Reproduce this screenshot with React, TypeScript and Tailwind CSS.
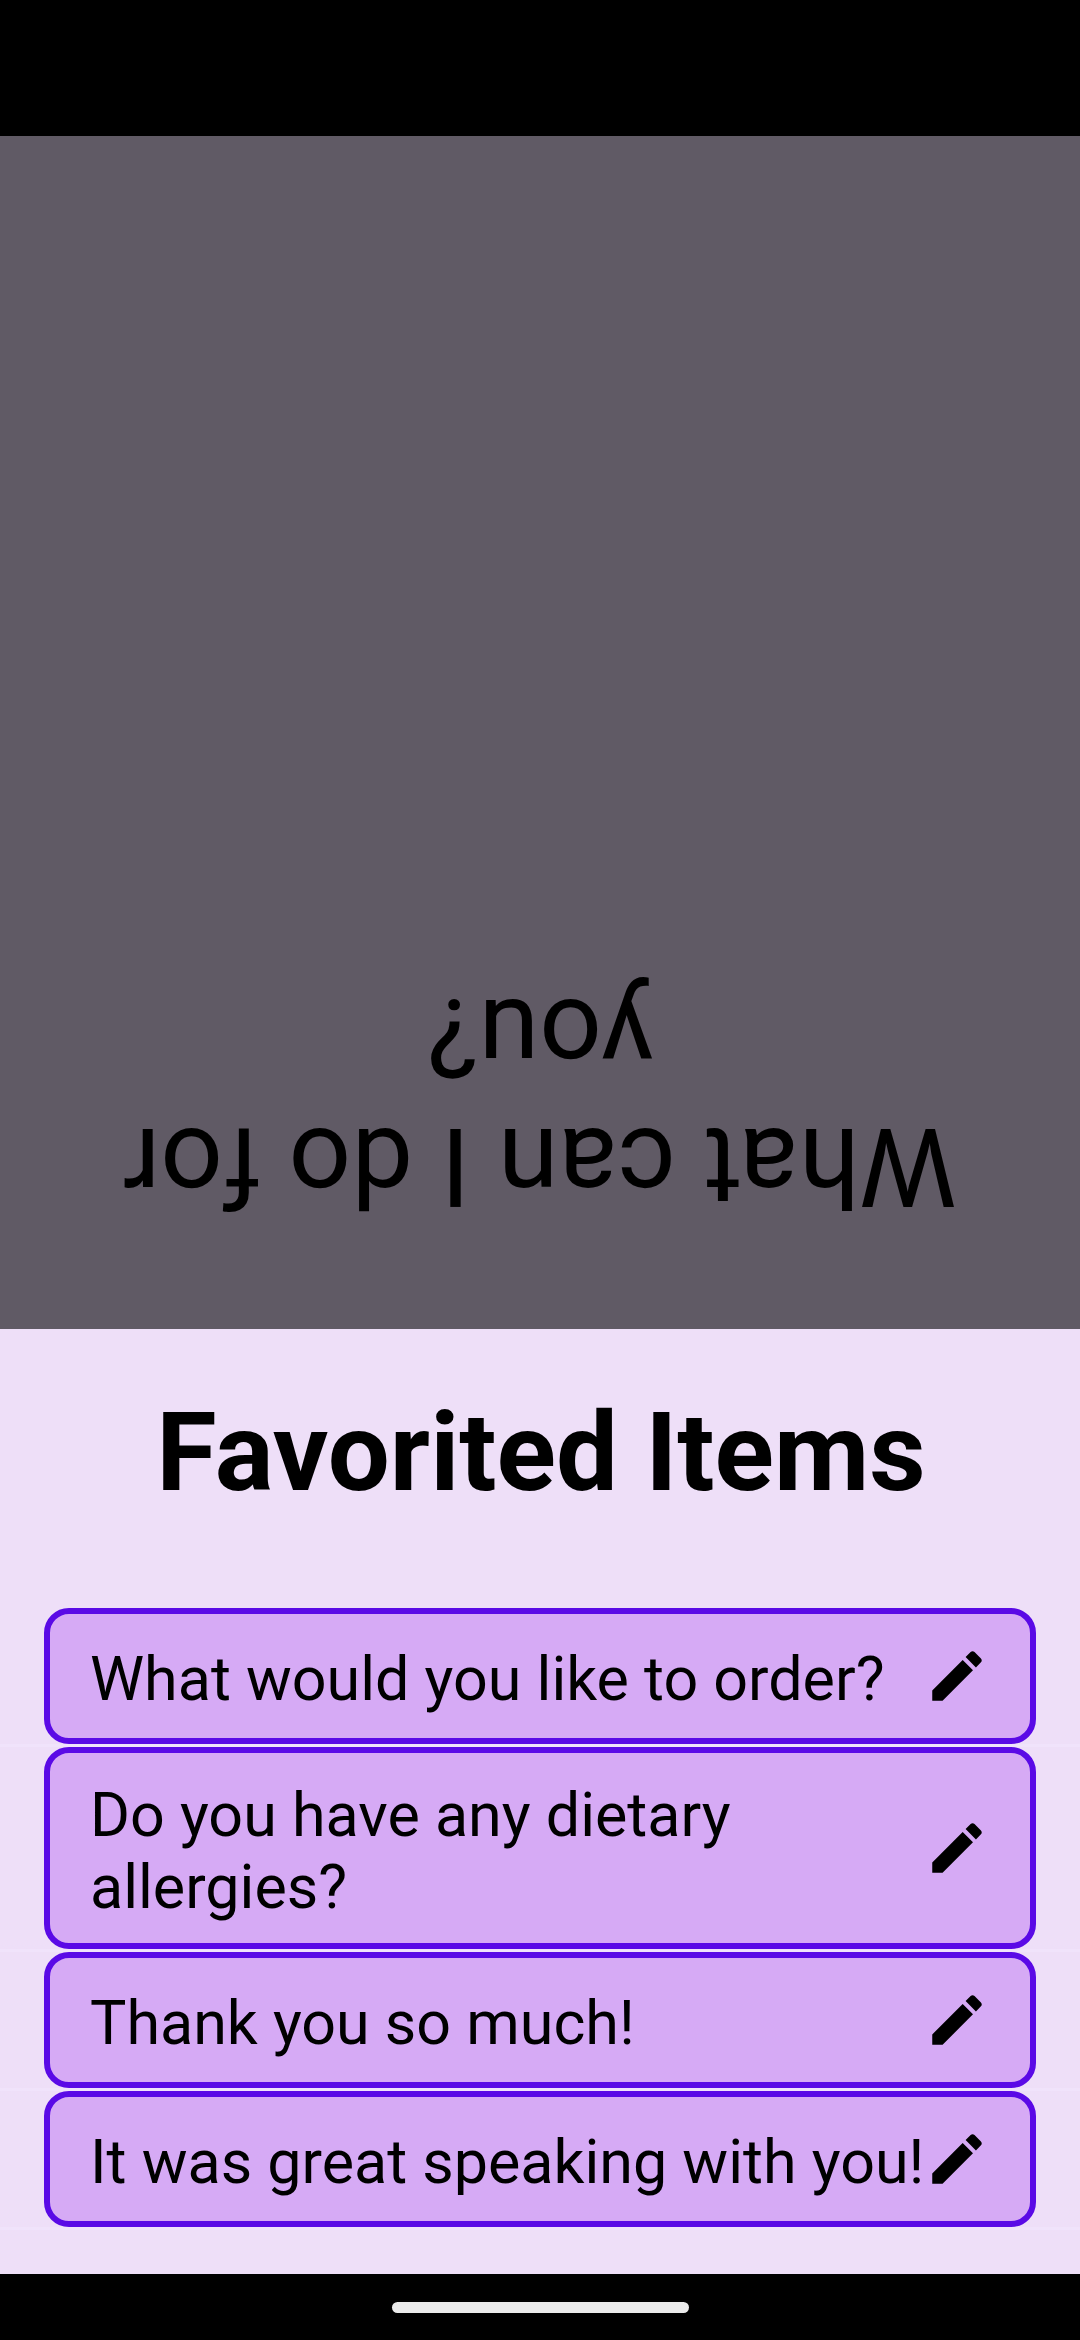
import React from "react";

function Pencil() {
  return (
    <svg viewBox="0 0 24 24" className="h-[66px] w-[66px] shrink-0" fill="#000">
      <path d="M3 17.25V21h3.75L17.81 9.94l-3.75-3.75L3 17.25zM20.71 7.04c.39-.39.39-1.02 0-1.41l-2.34-2.34c-.39-.39-1.02-.39-1.41 0l-1.83 1.83 3.75 3.75 1.83-1.83z" />
    </svg>
  );
}

function Item({ text, tall }: { text: string; tall?: boolean }) {
  return (
    <li className="border-b-[3px] border-[#f0e3fb] px-[44px]">
      <div
        className={`flex items-center rounded-[25px] border-[6px] border-[#5a0ae6] bg-[#d6aaf5] pl-[40px] ${
          tall ? "h-[202px]" : "h-[136px]"
        }`}
      >
        <p className="w-[834px] shrink-0 pt-[6px] text-[61px] leading-[72px]">
          <span className={tall ? "block w-[700px]" : "whitespace-nowrap"}>{text}</span>
        </p>
        <Pencil />
      </div>
    </li>
  );
}

export default function App() {
  return (
    <div className="flex h-[2340px] w-[1080px] flex-col overflow-hidden bg-black font-['Roboto',sans-serif] text-black">
      <div className="h-[136px] shrink-0" />
      <section className="flex h-[1193px] shrink-0 flex-col justify-end bg-[#605a65] pb-[98px]">
        <p className="rotate-180 text-center text-[110px] leading-[129px]">
          What can I do for
          <br />
          you?
        </p>
      </section>
      <section className="flex h-[945px] shrink-0 flex-col bg-[#eedff8] pt-[59px]">
        <h1 className="pl-[2px] text-center text-[110px] leading-[129px] font-bold">Favorited Items</h1>
        <ul className="mt-[91px]">
          <Item text="What would you like to order?" />
          <Item text="Do you have any dietary allergies?" tall />
          <Item text="Thank you so much!" />
          <Item text="It was great speaking with you!" />
        </ul>
      </section>
      <footer className="flex flex-1 items-center justify-center">
        <div className="h-[11px] w-[297px] rounded-full bg-[#ebebeb]" />
      </footer>
    </div>
  );
}
